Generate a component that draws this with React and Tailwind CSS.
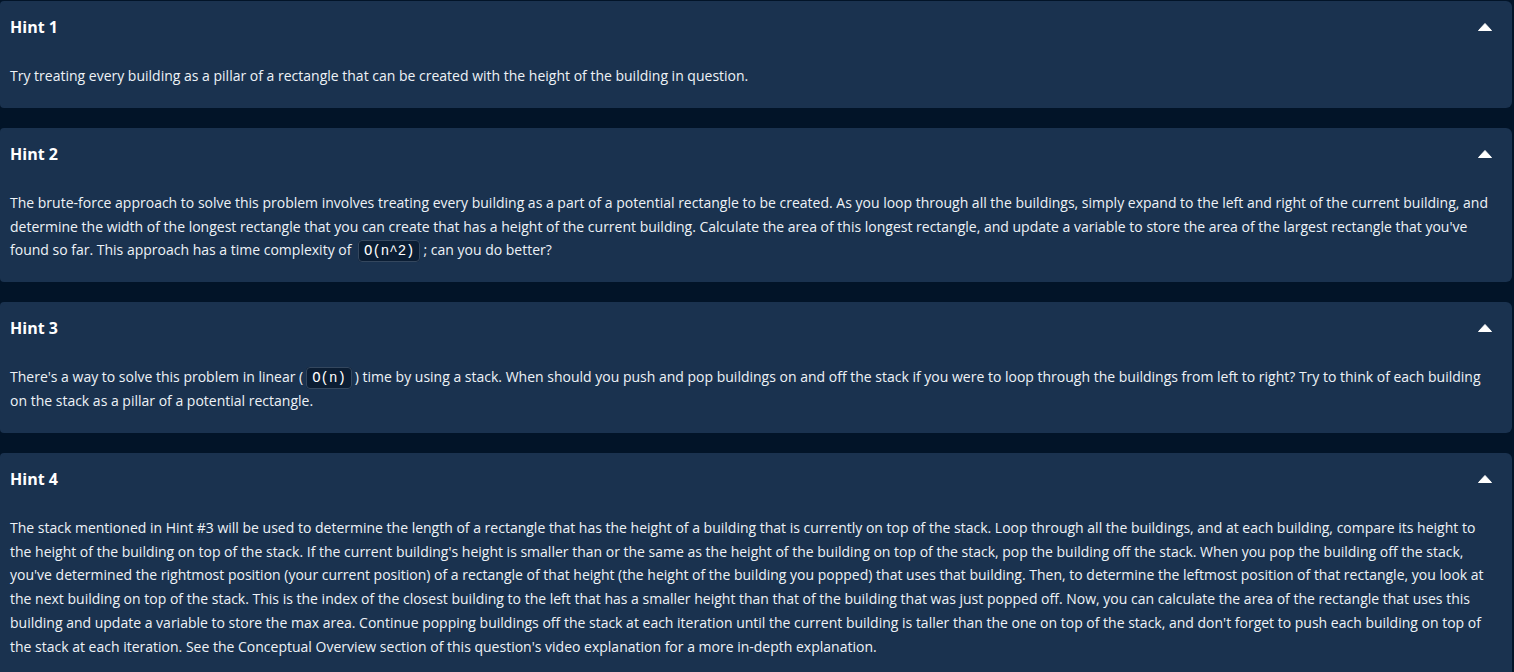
import React from "react";

const hints = [
  {
    title: "Hint 1",
    body: [
      "Try treating every building as a pillar of a rectangle that can be created with the height of the building in question.",
    ],
  },
  {
    title: "Hint 2",
    body: [
      "The brute-force approach to solve this problem involves treating every building as a part of a potential rectangle to be created. As you loop through all the buildings, simply expand to the left and right of the current building, and determine the width of the longest rectangle that you can create that has a height of the current building. Calculate the area of this longest rectangle, and update a variable to store the area of the largest rectangle that you've found so far. This approach has a time complexity of ",
      { code: "O(n^2)" },
      "; can you do better?",
    ],
  },
  {
    title: "Hint 3",
    body: [
      "There's a way to solve this problem in linear (",
      { code: "O(n)" },
      ") time by using a stack. When should you push and pop buildings on and off the stack if you were to loop through the buildings from left to right? Try to think of each building on the stack as a pillar of a potential rectangle.",
    ],
  },
  {
    title: "Hint 4",
    body: [
      "The stack mentioned in Hint #3 will be used to determine the length of a rectangle that has the height of a building that is currently on top of the stack. Loop through all the buildings, and at each building, compare its height to the height of the building on top of the stack. If the current building's height is smaller than or the same as the height of the building on top of the stack, pop the building off the stack. When you pop the building off the stack, you've determined the rightmost position (your current position) of a rectangle of that height (the height of the building you popped) that uses that building. Then, to determine the leftmost position of that rectangle, you look at the next building on top of the stack. This is the index of the closest building to the left that has a smaller height than that of the building that was just popped off. Now, you can calculate the area of the rectangle that uses this building and update a variable to store the max area. Continue popping buildings off the stack at each iteration until the current building is taller than the one on top of the stack, and don't forget to push each building on top of the stack at each iteration. See the Conceptual Overview section of this question's video explanation for a more in-depth explanation.",
    ],
  },
];

function Code({ children }) {
  // inline so the pill does not stretch the line box
  return (
    <code className="mx-[3px] rounded-[4px] border border-[#34475e] bg-[#0b1d33] px-[5px] py-[2px] text-[14px] leading-[16px] text-white font-['Liberation_Mono',monospace]">
      {children}
    </code>
  );
}

function Caret() {
  return (
    <svg width="16" height="10" viewBox="0 0 16 10" className="mr-[19px]">
      <path d="M8 1.5 L14.5 8.5 H1.5 Z" fill="#ffffff" stroke="#ffffff" strokeWidth="1" strokeLinejoin="round" />
    </svg>
  );
}

export default function App() {
  return (
    <div className="min-h-screen bg-[#021428] pt-px pr-0.5 font-['Open_Sans',sans-serif] text-white">
      <div className="flex flex-col gap-5">
        {hints.map((h) => (
          <div key={h.title} className="rounded-r-md rounded-l-sm bg-[#1a324f]">
            {/* Header */}
            <div className="flex h-[52px] items-center justify-between pl-2.5">
              <h3 className="text-[16px] font-bold">{h.title}</h3>
              <Caret />
            </div>
            {/* Body */}
            <p className="pl-2.5 pr-6 pt-[11px] pb-5 text-[14px] leading-[23.8px] text-[#eef2f7]">
              {h.body.map((part, i) =>
                typeof part === "string" ? (
                  <React.Fragment key={i}>{part}</React.Fragment>
                ) : (
                  <Code key={i}>{part.code}</Code>
                )
              )}
            </p>
          </div>
        ))}
      </div>
    </div>
  );
}
